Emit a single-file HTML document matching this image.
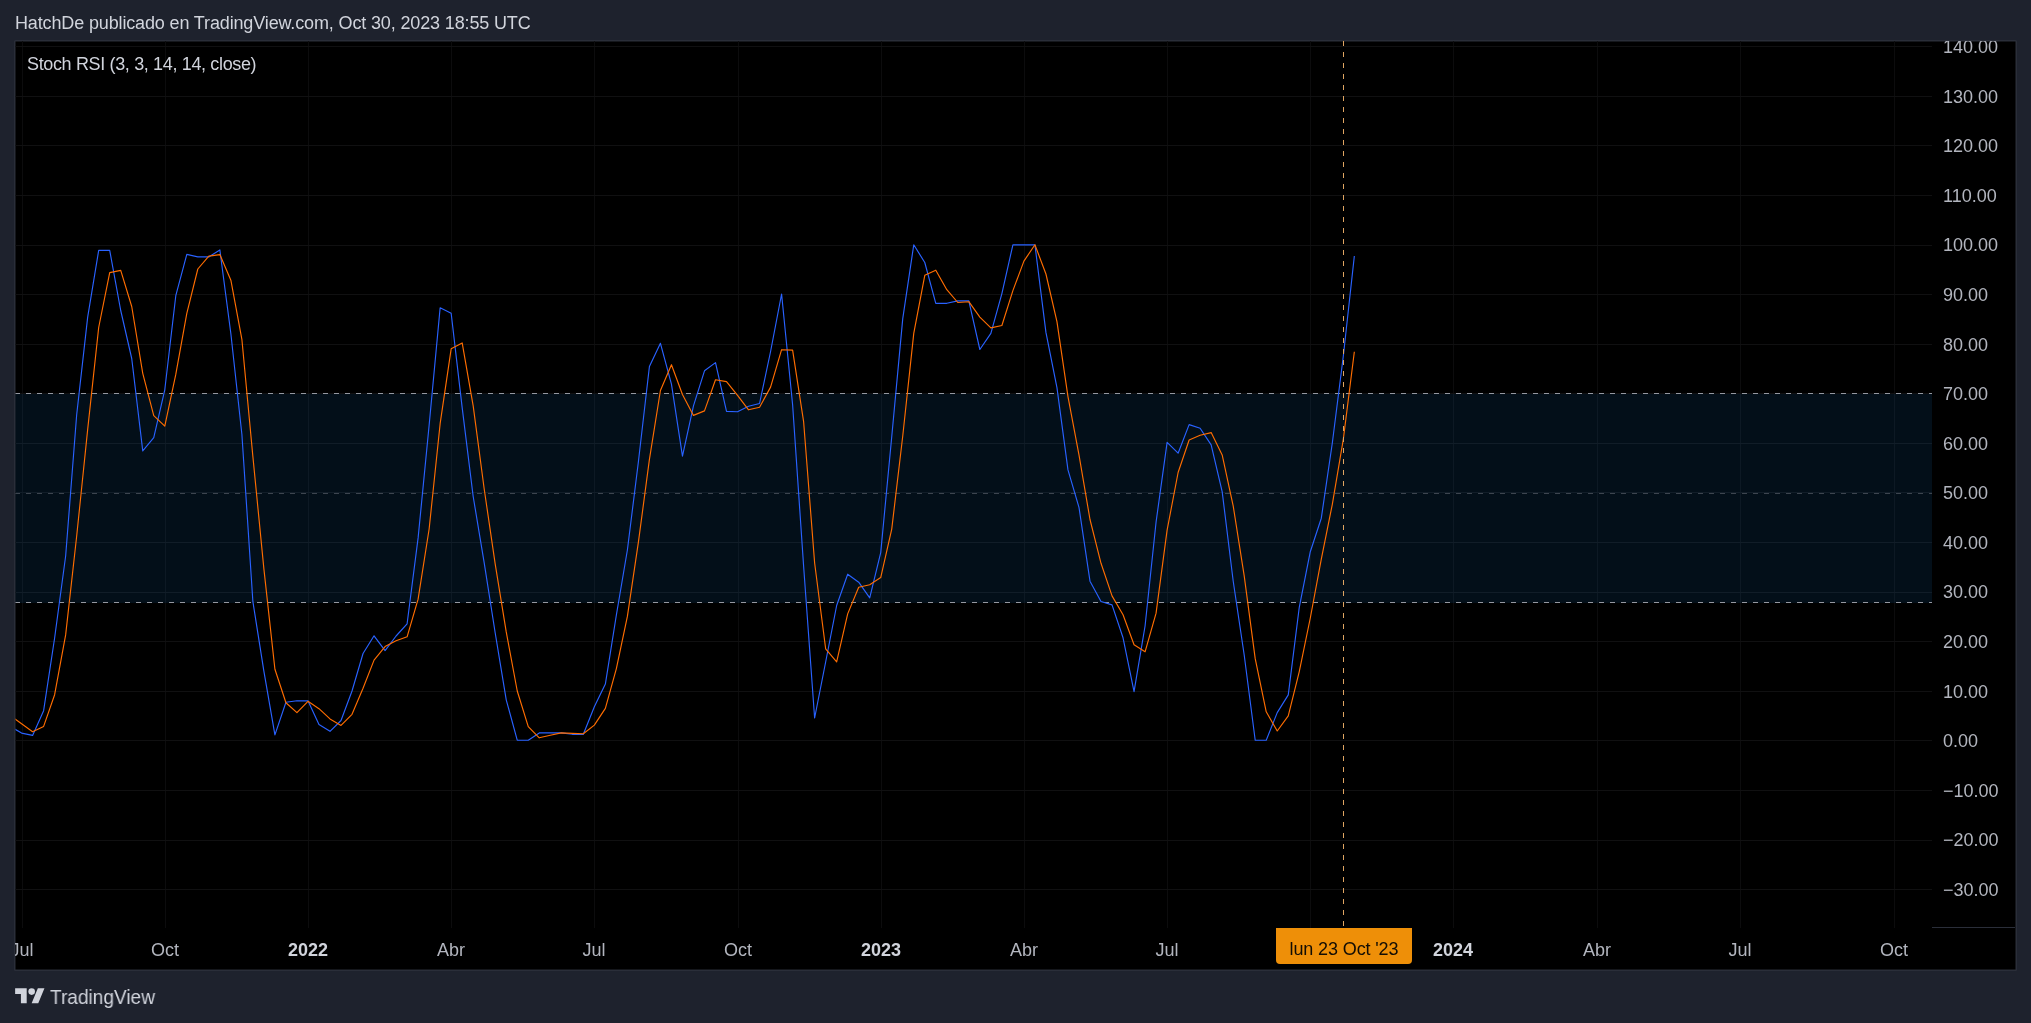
<!DOCTYPE html>
<html lang="es"><head><meta charset="utf-8"><title>Stoch RSI — TradingView</title>
<style>
html,body{margin:0;padding:0;background:#1e222d;}
body{width:2031px;height:1023px;position:relative;overflow:hidden;font-family:"Liberation Sans",sans-serif;color:#d1d4dc;}
.abs{position:absolute;white-space:nowrap;line-height:1;will-change:transform;}
#hdr{left:14.5px;top:13.5px;font-size:18px;color:#d1d4dc;letter-spacing:-0.14px;}
svg{position:absolute;left:0;top:0;}
.pl{font-size:18px;color:#b2b5be;text-align:left;width:70px;}
.tl{font-size:18px;color:#b2b5be;text-align:center;width:80px;}
.tl b{font-weight:700;color:#d1d4dc;}
#legend{left:26.5px;top:55px;font-size:18px;color:#d1d4dc;letter-spacing:-0.35px;}
#inner{position:absolute;left:0;top:0;width:2031px;height:1023px;clip-path:inset(41.5px 15.5px 53.5px 15.5px);}
#xlab{left:1276px;top:928px;width:136px;height:36px;background:#ee8f08;border-radius:0 0 4px 4px;color:#120d05;font-size:18px;text-align:center;line-height:43px;letter-spacing:-0.12px;}
#brand{left:49.5px;top:987px;font-size:20.8px;color:#d1d4dc;transform:scaleX(0.917);transform-origin:0 0;}
</style></head><body>
<div id="hdr" class="abs">HatchDe publicado en TradingView.com, Oct 30, 2023 18:55 UTC</div>
<svg width="2031" height="1023" viewBox="0 0 2031 1023">
<rect x="14" y="40" width="2003" height="931" rx="1.5" fill="#2a2e39"/><rect x="15.5" y="41.5" width="2000" height="928" fill="#000"/>
<defs><clipPath id="pane"><rect x="15.5" y="41" width="1916.5" height="887"/></clipPath></defs>
<g clip-path="url(#pane)" shape-rendering="crispEdges">
<rect x="22" y="41" width="1" height="887" fill="#0c0c0d"/>
<rect x="165" y="41" width="1" height="887" fill="#0c0c0d"/>
<rect x="308" y="41" width="1" height="887" fill="#0c0c0d"/>
<rect x="451" y="41" width="1" height="887" fill="#0c0c0d"/>
<rect x="594" y="41" width="1" height="887" fill="#0c0c0d"/>
<rect x="738" y="41" width="1" height="887" fill="#0c0c0d"/>
<rect x="881" y="41" width="1" height="887" fill="#0c0c0d"/>
<rect x="1024" y="41" width="1" height="887" fill="#0c0c0d"/>
<rect x="1167" y="41" width="1" height="887" fill="#0c0c0d"/>
<rect x="1310" y="41" width="1" height="887" fill="#0c0c0d"/>
<rect x="1453" y="41" width="1" height="887" fill="#0c0c0d"/>
<rect x="1597" y="41" width="1" height="887" fill="#0c0c0d"/>
<rect x="1740" y="41" width="1" height="887" fill="#0c0c0d"/>
<rect x="1894" y="41" width="1" height="887" fill="#0c0c0d"/>
<rect x="15" y="889" width="1917" height="1" fill="#101011"/>
<rect x="15" y="840" width="1917" height="1" fill="#101011"/>
<rect x="15" y="790" width="1917" height="1" fill="#101011"/>
<rect x="15" y="740" width="1917" height="1" fill="#101011"/>
<rect x="15" y="691" width="1917" height="1" fill="#101011"/>
<rect x="15" y="641" width="1917" height="1" fill="#101011"/>
<rect x="15" y="592" width="1917" height="1" fill="#101011"/>
<rect x="15" y="542" width="1917" height="1" fill="#101011"/>
<rect x="15" y="492" width="1917" height="1" fill="#101011"/>
<rect x="15" y="443" width="1917" height="1" fill="#101011"/>
<rect x="15" y="393" width="1917" height="1" fill="#101011"/>
<rect x="15" y="344" width="1917" height="1" fill="#101011"/>
<rect x="15" y="294" width="1917" height="1" fill="#101011"/>
<rect x="15" y="245" width="1917" height="1" fill="#101011"/>
<rect x="15" y="195" width="1917" height="1" fill="#101011"/>
<rect x="15" y="145" width="1917" height="1" fill="#101011"/>
<rect x="15" y="96" width="1917" height="1" fill="#101011"/>
<rect x="15" y="46" width="1917" height="1" fill="#101011"/>
<rect x="15" y="394" width="1917" height="209" fill="rgba(33,150,243,0.1)"/>
<line x1="15" x2="1932" y1="393.5" y2="393.5" stroke="#9598a1" stroke-width="1" stroke-dasharray="5 6"/>
<line x1="15" x2="1932" y1="602.5" y2="602.5" stroke="#9598a1" stroke-width="1" stroke-dasharray="5 6"/>
<line x1="15" x2="1932" y1="493.5" y2="493.5" stroke="#787b86" stroke-opacity="0.5" stroke-width="1" stroke-dasharray="5 6"/>
</g>
<g clip-path="url(#pane)" fill="none" stroke-linejoin="round" stroke-linecap="butt">
<polyline points="10.58,726.6 21.59,733.1 32.60,735.4 43.62,710.7 54.63,638.0 65.65,556.0 76.66,415.0 87.68,317.1 98.69,250.4 109.71,250.4 120.72,310.5 131.73,358.5 142.75,450.9 153.76,437.6 164.78,389.8 175.79,295.7 186.81,254.4 197.82,256.9 208.84,256.9 219.85,249.9 230.87,333.8 241.88,434.2 252.89,601.7 263.91,671.3 274.92,734.9 285.94,702.2 296.95,700.8 307.97,700.8 318.98,724.5 330.00,731.3 341.01,720.5 352.02,691.0 363.04,653.5 374.05,635.8 385.07,650.6 396.08,636.0 407.10,623.8 418.11,537.9 429.13,425.3 440.14,307.8 451.16,313.3 462.17,407.6 473.18,496.5 484.20,562.9 495.21,633.0 506.23,699.8 517.24,740.2 528.26,740.2 539.27,732.9 550.29,732.9 561.30,732.9 572.32,734.3 583.33,734.3 594.34,706.7 605.36,684.1 616.37,615.0 627.39,550.0 638.40,461.7 649.42,366.5 660.43,343.3 671.45,384.2 682.46,456.1 693.47,405.9 704.49,370.8 715.50,362.6 726.52,411.4 737.53,411.8 748.55,406.3 759.56,403.5 770.58,351.5 781.59,294.0 792.61,404.8 803.62,566.3 814.63,718.0 825.65,662.0 836.66,605.5 847.68,574.2 858.69,582.2 869.71,597.9 880.72,552.6 891.74,436.8 902.75,318.6 913.76,244.8 924.78,262.5 935.79,303.3 946.81,303.3 957.82,300.9 968.84,300.9 979.85,349.5 990.87,333.4 1001.88,293.6 1012.89,244.8 1023.91,244.8 1034.92,244.8 1045.94,332.4 1056.95,387.6 1067.97,469.9 1078.98,507.3 1090.00,581.2 1101.01,601.5 1112.03,604.9 1123.04,637.8 1134.05,691.6 1145.07,626.0 1156.08,522.0 1167.10,442.3 1178.11,453.2 1189.13,424.6 1200.14,428.2 1211.16,444.9 1222.17,491.6 1233.18,581.0 1244.20,655.0 1255.21,740.2 1266.23,740.2 1277.24,712.6 1288.26,694.9 1299.27,607.3 1310.29,551.7 1321.30,518.2 1332.32,443.0 1343.33,356.0 1354.34,256.0" stroke="#2962ff" stroke-width="1.15"/>
<polyline points="10.58,715.8 21.59,723.7 32.60,731.7 43.62,726.4 54.63,694.7 65.65,634.9 76.66,536.3 87.68,429.4 98.69,327.5 109.71,272.6 120.72,270.4 131.73,306.5 142.75,373.3 153.76,415.7 164.78,426.1 175.79,374.4 186.81,313.3 197.82,269.0 208.84,256.1 219.85,254.6 230.87,280.2 241.88,339.3 252.89,456.6 263.91,569.1 274.92,669.3 285.94,702.8 296.95,712.6 307.97,701.3 318.98,708.7 330.00,718.9 341.01,725.4 352.02,714.3 363.04,688.3 374.05,660.1 385.07,646.6 396.08,640.8 407.10,636.8 418.11,599.2 429.13,529.0 440.14,423.7 451.16,348.8 462.17,342.9 473.18,405.8 484.20,489.0 495.21,564.1 506.23,631.9 517.24,691.0 528.26,726.7 539.27,737.8 550.29,735.3 561.30,732.9 572.32,733.4 583.33,733.8 594.34,725.1 605.36,708.4 616.37,668.6 627.39,616.4 638.40,542.2 649.42,459.4 660.43,390.5 671.45,364.7 682.46,394.5 693.47,415.4 704.49,410.9 715.50,379.8 726.52,381.6 737.53,395.3 748.55,409.8 759.56,407.2 770.58,387.1 781.59,349.7 792.61,350.1 803.62,421.7 814.63,563.0 825.65,648.8 836.66,661.8 847.68,613.9 858.69,587.3 869.71,584.8 880.72,577.6 891.74,529.1 902.75,436.0 913.76,333.4 924.78,275.3 935.79,270.2 946.81,289.7 957.82,302.5 968.84,301.7 979.85,317.1 990.87,327.9 1001.88,325.5 1012.89,290.6 1023.91,261.1 1034.92,244.8 1045.94,274.0 1056.95,321.6 1067.97,396.6 1078.98,454.9 1090.00,519.5 1101.01,563.3 1112.03,595.9 1123.04,614.7 1134.05,644.8 1145.07,651.8 1156.08,613.2 1167.10,530.1 1178.11,472.5 1189.13,440.0 1200.14,435.3 1211.16,432.6 1222.17,454.9 1233.18,505.8 1244.20,575.9 1255.21,658.7 1266.23,711.8 1277.24,731.0 1288.26,715.9 1299.27,671.6 1310.29,618.0 1321.30,559.1 1332.32,504.3 1343.33,439.1 1354.34,351.7" stroke="#ff6d00" stroke-width="1.15"/>
</g>
<line x1="1343.5" x2="1343.5" y1="41" y2="928" stroke="#e0a562" stroke-width="1" stroke-dasharray="5 6" stroke-dashoffset="0" shape-rendering="crispEdges"/>
<rect x="1932" y="927" width="83" height="1" fill="#2a2e39" shape-rendering="crispEdges"/>
</svg>
<div id="inner">
<div class="abs pl" style="left:1943.3px;top:881.0px">−30.00</div>
<div class="abs pl" style="left:1943.3px;top:831.4px">−20.00</div>
<div class="abs pl" style="left:1943.3px;top:781.8px">−10.00</div>
<div class="abs pl" style="left:1943.3px;top:732.2px">0.00</div>
<div class="abs pl" style="left:1943.3px;top:682.6px">10.00</div>
<div class="abs pl" style="left:1943.3px;top:633.0px">20.00</div>
<div class="abs pl" style="left:1943.3px;top:583.4px">30.00</div>
<div class="abs pl" style="left:1943.3px;top:533.9px">40.00</div>
<div class="abs pl" style="left:1943.3px;top:484.3px">50.00</div>
<div class="abs pl" style="left:1943.3px;top:434.7px">60.00</div>
<div class="abs pl" style="left:1943.3px;top:385.1px">70.00</div>
<div class="abs pl" style="left:1943.3px;top:335.5px">80.00</div>
<div class="abs pl" style="left:1943.3px;top:285.9px">90.00</div>
<div class="abs pl" style="left:1943.3px;top:236.4px">100.00</div>
<div class="abs pl" style="left:1943.3px;top:186.8px">110.00</div>
<div class="abs pl" style="left:1943.3px;top:137.2px">120.00</div>
<div class="abs pl" style="left:1943.3px;top:87.6px">130.00</div>
<div class="abs pl" style="left:1943.3px;top:38.0px">140.00</div>
<div class="abs tl" style="left:-18.3px;top:940.6px">Jul</div>
<div class="abs tl" style="left:124.7px;top:940.6px">Oct</div>
<div class="abs tl" style="left:267.7px;top:940.6px"><b>2022</b></div>
<div class="abs tl" style="left:410.7px;top:940.6px">Abr</div>
<div class="abs tl" style="left:553.7px;top:940.6px">Jul</div>
<div class="abs tl" style="left:697.7px;top:940.6px">Oct</div>
<div class="abs tl" style="left:840.7px;top:940.6px"><b>2023</b></div>
<div class="abs tl" style="left:983.7px;top:940.6px">Abr</div>
<div class="abs tl" style="left:1126.7px;top:940.6px">Jul</div>
<div class="abs tl" style="left:1412.7px;top:940.6px"><b>2024</b></div>
<div class="abs tl" style="left:1556.7px;top:940.6px">Abr</div>
<div class="abs tl" style="left:1699.7px;top:940.6px">Jul</div>
<div class="abs tl" style="left:1853.7px;top:940.6px">Oct</div>
<div id="legend" class="abs">Stoch RSI (3, 3, 14, 14, close)</div>
<div id="xlab" class="abs">lun 23 Oct '23</div>
</div>
<svg id="logo" class="abs" style="left:15px;top:985px" width="30" height="19" viewBox="0 0 36 23"><path fill="#d1d4dc" d="M14 22H7V11H0V4h14v18zM28 22h-8l7.5-18h8L28 22z"/><circle fill="#d1d4dc" cx="20" cy="8" r="4"/></svg>
<div id="brand" class="abs">TradingView</div>
</body></html>
